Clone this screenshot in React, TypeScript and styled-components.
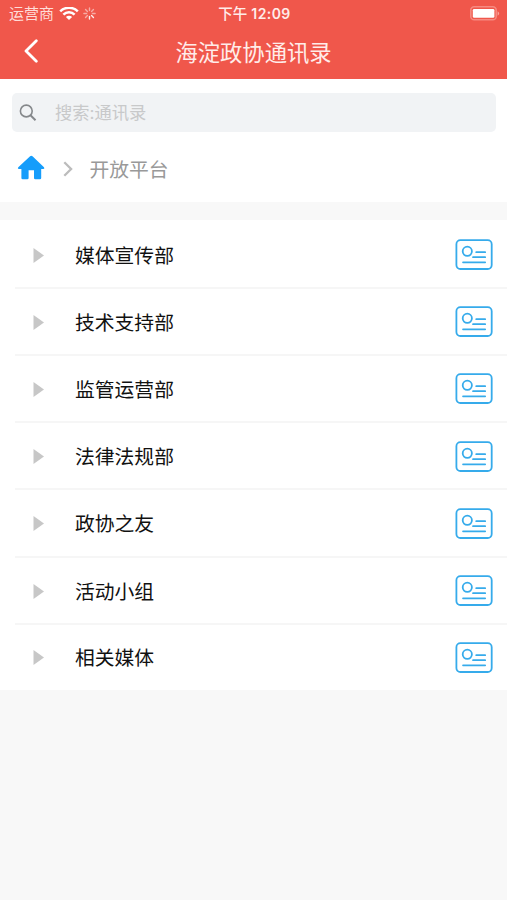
import React from "react";
import styled, { createGlobalStyle } from "styled-components";

const GlobalStyle = createGlobalStyle`
  * { box-sizing: border-box; }
  body {
    margin: 0;
    background: #f8f8f8;
    font-family: "Inter", "Noto Sans CJK SC", sans-serif;
  }
  svg { display: block; flex: none; }
`;

const Screen = styled.div`
  width: 100%;
  min-height: 900px;
  background: #f8f8f8;
`;

const Header = styled.header`
  height: 79px;
  background: #f0574b;
  color: #fff;
`;

const StatusBar = styled.div`
  display: grid;
  grid-template-columns: 1fr auto 1fr;
  align-items: center;
  height: 27px;
  padding: 0 7px 0 9px;
`;

const Carrier = styled.div`
  display: flex;
  align-items: center;
  font-size: 15px;
  line-height: 27px;
  color: #ffdcd8;
`;

const WifiIcon = styled.svg`
  margin-left: 5px;
`;

const SpinnerIcon = styled.svg`
  margin-left: 4px;
`;

const Clock = styled.div`
  font-size: 14.5px;
  font-weight: 500;
  line-height: 27px;
  white-space: nowrap;
  color: #ffece9;
`;

const Digits = styled.span`
  margin-left: 4px;
  font-weight: 600;
  font-size: 14px;
  letter-spacing: 0.4px;
`;

const BatteryIcon = styled.svg`
  justify-self: end;
`;

const TitleBar = styled.div`
  display: grid;
  grid-template-columns: 60px 1fr 60px;
  align-items: center;
  height: 52px;
`;

const BackButton = styled.button`
  display: flex;
  align-items: center;
  height: 48px;
  padding: 0 0 4px 23px;
  border: 0;
  background: none;
  color: #fff;
`;

const Title = styled.h1`
  margin: 0;
  text-align: center;
  font-size: 22.3px;
  font-weight: 400;
  line-height: 52px;
  white-space: nowrap;
  color: #ffece9;
`;

const TopPanel = styled.section`
  height: 123px;
  padding: 14px 11px 0 12px;
  background: #fff;
`;

const SearchBox = styled.div`
  display: flex;
  align-items: center;
  height: 39px;
  padding-left: 7px;
  border-radius: 5px;
  background: #f1f3f5;
`;

const Placeholder = styled.span`
  margin-left: 18px;
  font-size: 17.3px;
  line-height: 39px;
  color: #c8c9ca;
`;

const Breadcrumb = styled.nav`
  display: flex;
  align-items: center;
  height: 70px;
  padding: 3px 0 0 5px;
`;

const HomeIcon = styled.svg`
  margin-bottom: 2px;
`;

const CrumbArrow = styled.svg`
  margin-left: 17px;
`;

const Crumb = styled.span`
  margin-left: 15.5px;
  font-size: 19.8px;
  color: #999;
`;

const List = styled.ul`
  height: 470px;
  margin: 18px 0 0;
  padding: 1.6px 0 0;
  list-style: none;
  background: #fff;
`;

const Row = styled.li`
  display: flex;
  height: 67.2px;
  padding-left: 15px;

  &:last-child {
    height: 66px;
  }
`;

const RowBody = styled.div<{ $divided: boolean }>`
  display: flex;
  flex: 1;
  align-items: center;
  padding: 1.8px 14px 0 18px;
  border-bottom: 2px solid ${(p) => (p.$divided ? "#f6f6f6" : "transparent")};
`;

const Name = styled.span`
  flex: 1;
  margin-left: 31px;
  padding-top: 1px;
  font-size: 19.8px;
  line-height: 30px;
  color: #111;
`;

const departments = [
  "媒体宣传部",
  "技术支持部",
  "监管运营部",
  "法律法规部",
  "政协之友",
  "活动小组",
  "相关媒体",
];

const spokes = Array.from({ length: 8 }, (_, i) => i);

const CardIcon = () => (
  <svg width="38" height="32" viewBox="0 0 38 32" fill="none" stroke="#36abeb" strokeLinecap="round">
    <rect x="1.4" y="1.2" width="35.3" height="28.8" rx="4" strokeWidth="1.8" />
    <circle cx="12.3" cy="12.3" r="4.6" strokeWidth="1.8" />
    <path d="M21.200 13.200H30.200M18 18.200H30.200M8 23.300H30.200" strokeWidth="1.7" />
  </svg>
);

export default function App() {
  return (
    <Screen>
      <GlobalStyle />
      <Header>
        <StatusBar>
          <Carrier>
            运营商
            <WifiIcon width="20" height="14" viewBox="0 0 20 14" fill="none" stroke="#fff" strokeWidth="2.5">
              <path d="M1.200 4.400a12.500 12.500 0 0 1 17.600 0M4.400 7.700a7.900 7.900 0 0 1 11.200 0" />
              <path d="M10 13.100 6.900 10a4.400 4.400 0 0 1 6.200 0Z" fill="#fff" stroke="none" />
            </WifiIcon>
            <SpinnerIcon width="13" height="13" viewBox="0 0 13 13" stroke="#fff" strokeWidth="1.4" strokeLinecap="round">
              {spokes.map((i) => (
                <path
                  key={i}
                  d="M6.5 .9V3.6"
                  transform={`rotate(${i * 45} 6.5 6.5)`}
                  opacity={i === 3 || i === 4 ? 0.9 : 0.5}
                />
              ))}
            </SpinnerIcon>
          </Carrier>
          <Clock>
            下午<Digits>12:09</Digits>
          </Clock>
          <BatteryIcon width="30" height="15" viewBox="0 0 30 15">
            <rect x=".8" y=".8" width="25.4" height="13" rx="3.4" fill="none" stroke="#f68a81" strokeWidth="1.6" />
            <rect x="2.8" y="2.9" width="21.6" height="8.9" rx="1.4" fill="#fff" />
            <path d="M27.600 5.200q3 2.200 0 4.600Z" fill="#f9a59e" />
          </BatteryIcon>
        </StatusBar>
        <TitleBar>
          <BackButton aria-label="返回">
            <svg width="16" height="24" viewBox="0 0 16 24" fill="none" stroke="currentColor" strokeWidth="2.8" strokeLinecap="round" strokeLinejoin="round">
              <path d="M13.300 1.700 3 12 13.300 22.300" />
            </svg>
          </BackButton>
          <Title>海淀政协通讯录</Title>
        </TitleBar>
      </Header>
      <TopPanel>
        <SearchBox>
          <svg width="18" height="18" viewBox="0 0 18 18" fill="none" stroke="#85888b" strokeWidth="1.6">
            <circle cx="7.3" cy="7" r="5.9" />
            <path d="m11.500 11.300 5 5" strokeWidth="2" />
          </svg>
          <Placeholder>搜索:通讯录</Placeholder>
        </SearchBox>
        <Breadcrumb>
          <HomeIcon width="28" height="26" viewBox="0 0 28 26" fill="#159dfb">
            <path d="M13.100 1.200 1.300 12.300Q.200 14 2 14H4.400V23q0 1.300 1.300 1.300H10.300q1.300 0 1.300-1.300V15.200H17V23q0 1.300 1.300 1.300H22.900q1.300 0 1.300-1.300V14H26.400Q28 14 27 12.300L15.500 1.200Q14.300.200 13.100 1.200Z" />
          </HomeIcon>
          <CrumbArrow width="12" height="16" viewBox="0 0 12 16" fill="none" stroke="#bcbcbc" strokeWidth="2.3">
            <path d="m2.300 1.300 6.800 6.700-6.800 6.700" />
          </CrumbArrow>
          <Crumb>开放平台</Crumb>
        </Breadcrumb>
      </TopPanel>
      <List>
        {departments.map((name, i) => (
          <Row key={name}>
            <RowBody $divided={i < departments.length - 1}>
              <svg width="11" height="15" viewBox="0 0 11 15" fill="#c7c7c7">
                <path d="M.5 0 11 7.500.5 15Z" />
              </svg>
              <Name>{name}</Name>
              <CardIcon />
            </RowBody>
          </Row>
        ))}
      </List>
    </Screen>
  );
}
